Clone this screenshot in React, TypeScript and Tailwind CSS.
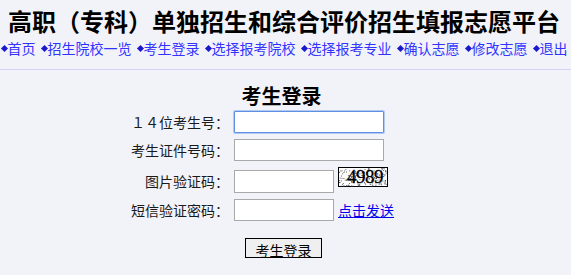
import React from "react";

const navItems = ["首页", "招生院校一览", "考生登录", "选择报考院校", "选择报考专业", "确认志愿", "修改志愿", "退出"];

function Captcha() {
  const dots: { x: number; y: number }[] = [];
  let s = 12345;
  for (let i = 0; i < 170; i++) {
    s = (s * 1103515245 + 12345) % 2147483648;
    const x = (s % 4800) / 100;
    s = (s * 1103515245 + 12345) % 2147483648;
    const y = (s % 1800) / 100;
    dots.push({ x: x + 1, y: y + 1 });
  }
  return (
    <svg width="50" height="20" viewBox="0 0 50 20" className="block">
      <rect x="0.5" y="0.5" width="49" height="19" fill="#ffffff" stroke="#000000" />
      {dots.map((d, i) => (
        <rect key={i} x={d.x} y={d.y} width="0.9" height="0.9" fill="#444" />
      ))}
      <text
        x="27"
        y="16"
        textAnchor="middle"
        fontFamily="'Liberation Serif', serif"
        fontSize="19"
        fill="#000"
        stroke="#000"
        strokeWidth="0.3"
        letterSpacing="-0.5"
      >
        4989
      </text>
    </svg>
  );
}

export default function App() {
  return (
    <div className="min-h-screen bg-[#f2f3f9] font-['Noto_Sans_CJK_SC',sans-serif] text-[#1a1a1a]">
      <h1 className="pt-[7px] pr-[3px] text-center text-[24px] font-bold leading-[28px] text-black">
        高职（专科）单独招生和综合评价招生填报志愿平台
      </h1>
      <nav className="mt-[5px] flex justify-center whitespace-nowrap pr-[3px] text-[14px] leading-[16px] text-[#3333ff]">
        {navItems.map((t, i) => (
          <span key={t} className={"flex shrink-0 items-center " + (i > 0 ? "ml-[5px]" : "")}>
            <span className="ml-[1px] mr-[1px] inline-block h-[5px] w-[5px] rotate-45 bg-[#1a1acc]" />
            <span>{t}</span>
          </span>
        ))}
      </nav>
      <div className="mt-[13px] h-[1px] bg-[#d6d4f6]" />
      <h2 className="mt-[14px] pr-[8px] text-center text-[20px] font-bold leading-[24px] text-black">考生登录</h2>

      <div className="mt-[3px] flex h-[22px] items-center">
        <span className="w-[229px] text-right text-[14px] leading-[16px]">１４位考生号：</span>
        <div className="ml-[5px] h-[22px] w-[150px] rounded-[1px] border border-[#5e8fe0] bg-white shadow-[0_0_0_1px_#b2caf2]" />
      </div>
      <div className="mt-[6px] flex h-[22px] items-center">
        <span className="w-[229px] text-right text-[14px] leading-[16px]">考生证件号码：</span>
        <div className="ml-[5px] h-[22px] w-[150px] border border-[#a9a9a9] bg-white" />
      </div>
      <div className="mt-[6px] flex h-[26px] items-start">
        <span className="mt-[6px] w-[229px] text-right text-[14px] leading-[16px]">图片验证码：</span>
        <div className="ml-[5px] mt-[3px] h-[23px] w-[100px] border border-[#a9a9a9] bg-white" />
        <div className="ml-[4px]">
          <Captcha />
        </div>
      </div>
      <div className="mt-[6px] flex h-[22px] items-center">
        <span className="w-[229px] text-right text-[14px] leading-[16px]">短信验证密码：</span>
        <div className="ml-[5px] h-[22px] w-[100px] border border-[#a9a9a9] bg-white" />
        <a href="#" className="ml-[4px] text-[14px] leading-[16px] text-[#0000ee] underline">
          点击发送
        </a>
      </div>
      <div className="mt-[17px] flex">
        <button className="ml-[245px] h-[20px] w-[77px] border border-black bg-[#efefef] pt-[3px] text-[14px] leading-[16px] text-black">
          考生登录
        </button>
      </div>
    </div>
  );
}
